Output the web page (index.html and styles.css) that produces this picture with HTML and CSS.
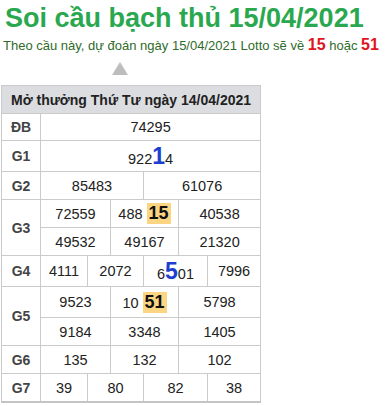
FILE: index.html
```html
<!DOCTYPE html>
<html lang="vi">
<head>
<meta charset="utf-8">
<title>Soi cầu bạch thủ 15/04/2021</title>
<link rel="stylesheet" href="styles.css">
</head>
<body>
<h1 class="title">Soi cầu bạch thủ 15/04/2021</h1>
<p class="subtitle">Theo cầu này, dự đoán ngày 15/04/2021 Lotto sẽ về <b class="pick">15</b> hoặc <b class="pick">51</b></p>
<div class="arrow"></div>
<table class="result">
  <colgroup>
    <col class="c-label"><col class="c1"><col class="c2"><col class="c3"><col class="c4"><col class="c5"><col class="c6">
  </colgroup>
  <tr class="head"><th colspan="7">Mở thưởng Thứ Tư ngày 14/04/2021</th></tr>
  <tr class="r-db"><td class="lbl">ĐB</td><td colspan="6">74295</td></tr>
  <tr class="r-big"><td class="lbl">G1</td><td colspan="6">922<span class="hit">1</span>4</td></tr>
  <tr class="r-std"><td class="lbl">G2</td><td colspan="3">85483</td><td colspan="3">61076</td></tr>
  <tr class="r-std"><td class="lbl" rowspan="2">G3</td><td colspan="2">72559</td><td colspan="2">488 <span class="mark">15</span></td><td colspan="2">40538</td></tr>
  <tr class="r-std"><td colspan="2">49532</td><td colspan="2">49167</td><td colspan="2">21320</td></tr>
  <tr class="r-big"><td class="lbl">G4</td><td>4111</td><td colspan="2">2072</td><td colspan="2">6<span class="hit">5</span>01</td><td>7996</td></tr>
  <tr class="r-big"><td class="lbl" rowspan="2">G5</td><td colspan="2">9523</td><td colspan="2">10 <span class="mark">51</span></td><td colspan="2">5798</td></tr>
  <tr class="r-std"><td colspan="2">9184</td><td colspan="2">3348</td><td colspan="2">1405</td></tr>
  <tr class="r-std"><td class="lbl">G6</td><td colspan="2">135</td><td colspan="2">132</td><td colspan="2">102</td></tr>
  <tr class="r-std"><td class="lbl">G7</td><td>39</td><td colspan="2">80</td><td colspan="2">82</td><td>38</td></tr>
</table>
</body>
</html>
```
FILE: styles.css
```css
html, body {
  margin: 0;
  padding: 0;
  background: #fff;
}
body {
  font-family: "Liberation Sans", Arial, sans-serif;
  color: #222;
}
.title {
  margin: 0;
  padding: 3px 0 0 5px;
  font-size: 27px;
  line-height: 31px;
  font-weight: bold;
  color: #2aa84f;
}
.subtitle {
  margin: 3px 0 0 3px;
  font-size: 13px;
  line-height: 16px;
  color: #2f6b2a;
  white-space: nowrap;
}
.pick {
  color: #e0141e;
  font-size: 16px;
}
.arrow {
  width: 0;
  height: 0;
  margin: 8px 0 0 112px;
  border-left: 8px solid transparent;
  border-right: 8px solid transparent;
  border-bottom: 13px solid #bdbdbd;
}
.result {
  margin: 10px 0 0 1px;
  width: 260px;
  table-layout: fixed;
  border-collapse: collapse;
  border-bottom: 2px solid #c4c4c4;
}
.c-label { width: 39px; }
.c1 { width: 47px; }
.c2 { width: 23px; }
.c3 { width: 33px; }
.c4 { width: 35px; }
.c5 { width: 29px; }
.c6 { width: 53px; }
.result th,
.result td {
  border: 1px solid #cbcbcb;
  padding: 0;
  text-align: center;
  vertical-align: middle;
  font-size: 14.5px;
  white-space: nowrap;
}
.result th {
  height: 27px;
  background: #dcdde1;
  font-size: 14px;
  font-weight: bold;
  color: #222;
}
.result td.lbl {
  font-weight: bold;
  color: #444;
  font-size: 14px;
}
.r-db td { height: 26px; }
.r-std td { height: 27px; }
.r-big td { height: 30px; }
.hit {
  color: #1c3fd0;
  font-weight: bold;
  font-size: 23px;
  line-height: 20px;
}
.mark {
  display: inline-block;
  padding: 1px 2px;
  background: #fcd583;
  font-weight: bold;
  font-size: 18px;
  line-height: 19px;
  color: #111;
}
```
